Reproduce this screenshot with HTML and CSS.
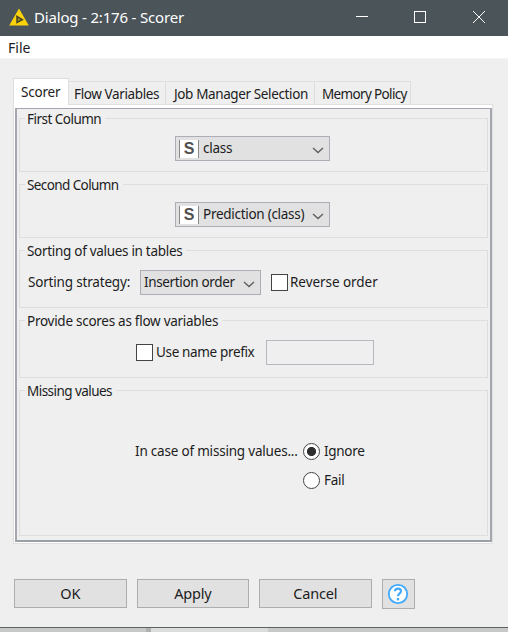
FILE: index.html
```html
<!DOCTYPE html>
<html lang="en">
<head>
<meta charset="utf-8">
<title>Dialog - 2:176 - Scorer</title>
<link rel="stylesheet" href="styles.css">
</head>
<body>
<div class="window">
  <header class="titlebar">
    <svg class="logo" width="20" height="18" viewBox="0 0 20 18"><path d="M10 0.5L19.8 17.5H0.2Z" fill="#fcd208"/><path d="M8 8.5L13.3 11.7L8 14.5Z" stroke="#4b4a28" stroke-width="1.6" fill="#a58d1c"/></svg>
    <span class="title">Dialog - 2:176 - Scorer</span>
    <svg class="controls" width="129" height="12" viewBox="0 0 129 12" fill="none" stroke="#fff"><path d="M0 5.5H12"/><rect x="58.5" y="0.5" width="11" height="11"/><path d="M117 0L129 12M129 0L117 12"/></svg>
  </header>
  <nav class="menubar"><span class="menu-item">File</span></nav>
  <main class="content">
    <div class="tabs">
      <div class="tab active"><span>Scorer</span></div>
      <div class="tab flow"><span>Flow Variables</span></div>
      <div class="tab job"><span>Job Manager Selection</span></div>
      <div class="tab memory"><span>Memory Policy</span></div>
    </div>
    <div class="pane">
      <div class="pane-inner">
        <section class="group g1">
          <h2>First Column</h2>
          <div class="row">
            <div class="select wide"><span class="type">S</span><span class="value">class</span><svg class="chev" width="12" height="7" viewBox="0 0 12 7"><path d="M1 1L6 5.6L11 1"/></svg></div>
          </div>
        </section>
        <section class="group g2">
          <h2>Second Column</h2>
          <div class="row">
            <div class="select wide"><span class="type">S</span><span class="value">Prediction (class)</span><svg class="chev" width="12" height="7" viewBox="0 0 12 7"><path d="M1 1L6 5.6L11 1"/></svg></div>
          </div>
        </section>
        <section class="group g3">
          <h2>Sorting of values in tables</h2>
          <div class="row sorting">
            <span class="strategy">Sorting strategy:</span>
            <div class="select order"><span class="value">Insertion order</span><svg class="chev" width="12" height="7" viewBox="0 0 12 7"><path d="M1 1L6 5.6L11 1"/></svg></div>
            <i class="check"></i><span class="reverse">Reverse order</span>
          </div>
        </section>
        <section class="group g4">
          <h2>Provide scores as flow variables</h2>
          <div class="row prefix">
            <i class="check"></i><span class="prefix-label">Use name prefix</span><div class="field"></div>
          </div>
        </section>
        <section class="group g5">
          <h2>Missing values</h2>
          <div class="missing">
            <span class="case">In case of missing values...</span>
            <div class="radios">
              <div class="option"><i class="radio on"></i><span>Ignore</span></div>
              <div class="option"><i class="radio"></i><span>Fail</span></div>
            </div>
          </div>
        </section>
      </div>
    </div>
    <footer class="actions">
      <div class="button">OK</div>
      <div class="button">Apply</div>
      <div class="button">Cancel</div>
      <div class="help"><svg width="22" height="22" viewBox="0 0 22 22" fill="none"><circle cx="11" cy="11" r="9.2" fill="#fff" stroke="#42a9fb" stroke-width="1.8"/><path d="M8 8.2C8 4.7 14 4.7 14 8.2C14 10.4 11 10.4 11 13.3" stroke="#42a9fb" stroke-width="2.1"/><rect x="9.8" y="15" width="2.4" height="2.4" fill="#42a9fb"/></svg></div>
    </footer>
  </main>
</div>
<div class="beneath"><i class="left"></i><i class="divider"></i><i class="mid"></i><i class="right"></i></div>
</body>
</html>
```

FILE: styles.css
```css
* { box-sizing: border-box; }
body { margin: 0; width: 508px; height: 632px; overflow: hidden; font: 13.5px/18px "Noto Sans", "Open Sans", sans-serif; color: #1c1c22; background: #d0d0d0; }
span, h2, .button { white-space: nowrap; }
.window { height: 628px; background: #efefef; border-bottom: 1px solid #5a6266; }
.titlebar { height: 36px; background: #4b5458; display: flex; align-items: center; padding: 0 23px 2px 9px; color: #fff; }
.logo { margin-top: -1px; }
.title { font-size: 15px; letter-spacing: -0.18px; margin-left: 5px; flex: 1; }
.menubar { height: 23px; background: #fff; border-bottom: 1px solid #f5f5f5; padding: 3px 8px; font-size: 14px; }
.content { padding: 19px 15px 0 13px; }
.tabs { height: 26px; display: flex; align-items: flex-end; position: relative; }
.tab { height: 23px; border: 1px solid #dedede; border-left: 0; border-bottom: 0; padding: 3px 0 0 5px; }
.tab.active { height: 27px; width: 56px; background: #fff; border-left: 1px solid #dedede; padding: 4px 0 0 7px; margin-bottom: -1px; letter-spacing: -0.2px; }
.flow { width: 97px; letter-spacing: -0.38px; }
.job { width: 149px; padding-left: 8px; letter-spacing: -0.38px; }
.memory { width: 96px; padding-left: 7px; letter-spacing: -0.65px; }
.pane { width: 480px; height: 440px; border: 1px solid #dfdfdf; background: #fff; padding: 3px 1px 1px; }
.pane-inner { width: 477px; height: 434px; border: 2px solid #a4a7b0; border-top-width: 1px; border-bottom-color: #9aa0a5; background: #efefef; padding: 9px 2px 0; }
.group { width: 469px; border: 1px solid #dedede; margin-bottom: 12px; }
.g1 { height: 54px; }
.g2 { height: 54px; }
.g3 { height: 58px; }
.g4 { height: 58px; }
.g5 { height: 146px; margin: 0; }
h2 { margin: -9px 0 0 5px; padding: 0 4px 0 2px; width: max-content; font: inherit; background: #efefef; }
.g1 h2 { letter-spacing: -0.52px; }
.g2 h2 { letter-spacing: -0.6px; }
.g3 h2 { letter-spacing: -0.3px; }
.g4 h2 { letter-spacing: -0.27px; }
.g5 h2 { letter-spacing: -0.55px; }
.row { display: flex; align-items: center; justify-content: center; margin-top: 8px; height: 25px; }
.select { height: 25px; background: #e1e1e1; border: 1px solid #adadb5; display: flex; align-items: center; padding: 0 5px 0 3px; }
.wide { width: 155px; margin-right: 2px; }
.type { width: 20px; height: 18px; background: #fff; border: solid #888; border-width: 0 1px; font: bold 16px/18px "Liberation Sans", sans-serif; color: #505050; text-align: center; margin-right: 4px; }
.value { flex: 1; margin-top: -1px; letter-spacing: -0.28px; }
.chev { fill: none; stroke: #606060; stroke-width: 1.4; margin-top: 4px; }
.row.sorting { justify-content: flex-start; padding-left: 8px; margin-top: 10px; }
.strategy { width: 112px; letter-spacing: -0.18px; margin-top: -1px; }
.order { width: 121px; margin-right: 10px; }
.order .value { letter-spacing: -0.35px; }
.check { width: 17px; height: 17px; border: 1px solid #444; background: #fff; margin-right: 2px; }
.reverse, .prefix-label { margin-top: -1px; }
.reverse { letter-spacing: -0.05px; }
.row.prefix { justify-content: flex-start; padding-left: 116px; margin-top: 10px; }
.prefix .check { margin-right: 3px; }
.prefix-label { width: 110px; letter-spacing: -0.35px; }
.field { width: 108px; height: 25px; border: 1px solid #b8b8c0; }
.missing { display: flex; padding-left: 115px; margin-top: 42px; }
.case { width: 168px; letter-spacing: -0.2px; }
.option { display: flex; align-items: center; height: 18px; margin-bottom: 11px; letter-spacing: -0.3px; }
.radio { width: 17px; height: 17px; border: 1px solid #444; border-radius: 50%; background: #fff; margin-right: 4px; }
.radio.on { background: radial-gradient(circle, #303030 0 4.2px, #fff 4.9px); }
.actions { display: flex; margin: 35px 0 0 1px; gap: 10px; }
.button { width: 112.5px; height: 29px; background: #e1e1e1; border: 1px solid #adadad; text-align: center; line-height: 27px; font-size: 14.5px; letter-spacing: -0.2px; }
.help { width: 33px; height: 30px; background: #e1e1e1; border: 1px solid #adadad; display: flex; align-items: center; justify-content: center; }
.beneath { display: flex; height: 4px; }
.left { width: 146px; background: #c8c8c8; }
.divider { width: 5px; background: #b0b0b0; }
.mid { width: 117px; background: #dcdcdc; }
.right { flex: 1; background: #c8c8c8; }
```
